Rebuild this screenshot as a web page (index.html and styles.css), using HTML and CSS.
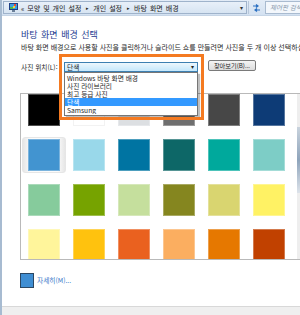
FILE: index.html
```html
<!DOCTYPE html>
<html lang="ko">
<head>
    <meta charset="UTF-8">
    <title>바탕 화면 배경</title>
    <link rel="stylesheet" href="styles.css">
</head>
<body>

<div class="window">

    <div class="navbar">
        <div class="address">
            <svg class="cp-icon" width="9" height="9" viewBox="0 0 9 9">
                <rect x="0" y="0" width="9" height="7" fill="#1f3f86"/>
                <rect x="1" y="1" width="7" height="5" fill="#39a0e3"/>
                <rect x="1" y="4" width="3" height="2" fill="#4fb848"/>
                <rect x="5" y="1" width="2" height="2" fill="#e8483a"/>
                <rect x="4" y="3" width="2" height="2" fill="#f6d43a"/>
                <rect x="3" y="7" width="3" height="2" fill="#6a7f99"/>
            </svg>
            <span class="chev">«</span>
            <span class="crumb">모양 및 개인 설정</span>
            <span class="sep">▸</span>
            <span class="crumb">개인 설정</span>
            <span class="sep">▸</span>
            <span class="crumb">바탕 화면 배경</span>
            <span class="addr-drop">▾</span>
        </div>
        <div class="refresh">
            <svg width="9" height="8" viewBox="0 0 9 8">
                <path d="M1 2 H6 M4 0.5 L6 2 L4 3.5" stroke="#2a6fc2" stroke-width="1.2" fill="none"/>
                <path d="M8 6 H3 M5 4.5 L3 6 L5 7.5" stroke="#2a6fc2" stroke-width="1.2" fill="none"/>
            </svg>
        </div>
        <div class="search">제어판 검색</div>
    </div>

    <div class="content">
        <h1>바탕 화면 배경 선택</h1>
        <p class="desc">바탕 화면 배경으로 사용할 사진을 클릭하거나 슬라이드 쇼를 만들려면 사진을 두 개 이상 선택하십시오.</p>

        <div class="location">
            <label>사진 위치(L):</label>
            <div class="combo">
                <span class="combo-value">단색</span>
                <span class="combo-arrow">▾</span>
                <ul class="combo-list">
                    <li>Windows 바탕 화면 배경</li>
                    <li>사진 라이브러리</li>
                    <li>최고 등급 사진</li>
                    <li class="selected">단색</li>
                    <li>Samsung</li>
                </ul>
                <div class="callout"></div>
            </div>
            <button class="browse">찾아보기(B)...</button>
        </div>

        <div class="swatches">
            <div class="grid">
                <div class="swatch" style="background:#000000"></div>
                <div class="swatch white" style="background:#ffffff"></div>
                <div class="swatch" style="background:#dcdfe2"></div>
                <div class="swatch" style="background:#6f6f6f"></div>
                <div class="swatch" style="background:#474747"></div>
                <div class="swatch" style="background:#0d3b76"></div>

                <div class="swatch current" style="background:#4294d0"></div>
                <div class="swatch" style="background:#99d8ea"></div>
                <div class="swatch" style="background:#0074a2"></div>
                <div class="swatch" style="background:#0d6767"></div>
                <div class="swatch" style="background:#00a99c"></div>
                <div class="swatch" style="background:#7dcdc6"></div>

                <div class="swatch" style="background:#86cb9c"></div>
                <div class="swatch" style="background:#76a300"></div>
                <div class="swatch" style="background:#c5df9d"></div>
                <div class="swatch" style="background:#85861f"></div>
                <div class="swatch" style="background:#d9d570"></div>
                <div class="swatch" style="background:#fff264"></div>

                <div class="swatch" style="background:#fff59b"></div>
                <div class="swatch" style="background:#ffc20e"></div>
                <div class="swatch" style="background:#ea611f"></div>
                <div class="swatch" style="background:#fbae60"></div>
                <div class="swatch" style="background:#e67800"></div>
                <div class="swatch" style="background:#c14100"></div>
            </div>
            <div class="scroll"></div>
        </div>

        <a class="more"><span class="more-icon"></span>자세히(M)...</a>
    </div>

    <div class="statusbar"></div>

</div>

</body>
</html>
```

FILE: styles.css
```css
html, body {
    margin: 0;
    padding: 0;
    background: #ffffff;
}

body {
    width: 300px;
    height: 315px;
    overflow: hidden;
    font-family: "Noto Sans CJK KR", "Noto Sans", sans-serif;
    color: #1e1e1e;
}

.window {
    height: 315px;
    display: flex;
    flex-direction: column;
    border-left: 2px solid #a7bbd1;
    box-sizing: border-box;
}

/* 상단 주소 표시줄 */
.navbar {
    height: 16px;
    display: flex;
    align-items: center;
    padding-left: 1px;
    background: linear-gradient(#e3ecf7, #d3e1f1);
    border-bottom: 1px solid #c6d5e6;
    box-sizing: border-box;
}

.address {
    width: 244px;
    height: 13px;
    display: flex;
    align-items: center;
    padding-left: 5px;
    border: 1px solid #9fb3cb;
    background: linear-gradient(#e8f0f9, #d7e4f2);
    box-sizing: border-box;
    font-size: 7px;
    white-space: nowrap;
}

.cp-icon {
    display: block;
    margin-right: 3px;
}

.chev {
    margin-right: 3px;
    font-size: 7px;
}

.crumb {
    word-spacing: 1px;
}

.sep {
    margin: 0 4px 0 5px;
    font-size: 5px;
}

.addr-drop {
    margin-left: auto;
    margin-right: 3px;
    font-size: 6px;
    color: #333;
}

.refresh {
    width: 14px;
    height: 13px;
    display: flex;
    align-items: center;
    justify-content: center;
    border-left: 1px solid #b7c7da;
    margin-left: 1px;
}

.search {
    flex: 1;
    height: 13px;
    margin-left: 2px;
    padding-left: 4px;
    border: 1px solid #a9bbd0;
    border-right: none;
    background: #f3f7fc;
    box-sizing: border-box;
    font-size: 6.5px;
    line-height: 11px;
    font-style: italic;
    color: #8797ad;
    white-space: nowrap;
    overflow: hidden;
}

/* 본문 */
.content {
    padding-left: 18px;
}

h1 {
    margin: 13px 0 0 1px;
    font-size: 9px;
    line-height: 12px;
    font-weight: normal;
    color: #1e3c91;
    word-spacing: 1px;
}

.desc {
    margin: 2px 0 0 1px;
    font-size: 7px;
    line-height: 9px;
    white-space: nowrap;
    overflow: hidden;
    color: #2a2a2a;
}

.location {
    margin: 8px 0 0 1px;
    height: 12px;
    display: flex;
    align-items: flex-start;
}

.location label {
    width: 43px;
    margin-top: 2px;
    font-size: 6.7px;
    line-height: 10px;
}

.combo {
    position: relative;
    width: 134px;
    height: 10px;
    margin-top: 2px;
    display: flex;
    align-items: center;
    border: 1px solid #3c7fb1;
    background: linear-gradient(#edf7fd, #c4e7fb);
    box-sizing: border-box;
}

.combo-value {
    padding-left: 2px;
    font-size: 6.7px;
    line-height: 8px;
}

.combo-arrow {
    margin-left: auto;
    margin-right: 3px;
    font-size: 6px;
    line-height: 8px;
}

/* 펼쳐진 목록 */
.combo-list {
    position: absolute;
    top: 9px;
    left: -1px;
    width: 134px;
    margin: 0;
    padding: 1px 0 1px;
    list-style: none;
    background: #ffffff;
    border: 1px solid #767676;
    box-sizing: border-box;
    box-shadow: 2px 2px 1px rgba(0, 0, 0, 0.25);
    z-index: 2;
}

.combo-list li {
    height: 8px;
    padding-left: 2px;
    font-size: 6.7px;
    line-height: 8px;
    white-space: nowrap;
    overflow: hidden;
}

.combo-list li.selected {
    background: #3399ff;
    color: #ffffff;
}

/* 강조 표시 테두리 */
.callout {
    position: absolute;
    left: -6px;
    top: -9px;
    width: 145px;
    height: 66px;
    border: 3px solid #f47a21;
    box-sizing: border-box;
    pointer-events: none;
    z-index: 3;
}

.browse {
    width: 48px;
    height: 11px;
    margin-left: 10px;
    padding: 0;
    border: 1px solid #7a7a7a;
    border-radius: 2px;
    background: linear-gradient(#f4f4f4, #dcdcdc);
    font-family: inherit;
    font-size: 6.2px;
    line-height: 9px;
    color: #1e1e1e;
}

/* 색 견본 */
.swatches {
    margin: 21px 0 0 0;
    height: 167px;
    display: flex;
    border: 1px solid #b9b9b9;
    border-right: none;
    box-sizing: border-box;
}

.grid {
    position: relative;
    z-index: 0;
    flex: 1;
    display: grid;
    grid-template-columns: repeat(6, 32px);
    grid-auto-rows: 32px;
    gap: 13px;
    padding-left: 7px;
    overflow: hidden;
}

.swatch {
    position: relative;
    box-shadow: inset 0 0 0 1px rgba(255, 255, 255, 0.3);
}

.swatch.white {
    box-shadow: inset 0 0 0 1px #f2f2f2;
}

.swatch.current::before {
    content: "";
    position: absolute;
    left: -6px;
    top: -2px;
    width: 44px;
    height: 36px;
    border: 1px solid #e6e6e6;
    border-radius: 3px;
    background: linear-gradient(90deg, #e6e6e6, #fbfbfb 18%, #fbfbfb 82%, #e6e6e6);
    box-sizing: border-box;
    z-index: -1;
}

.scroll {
    width: 3px;
    background: linear-gradient(#eeeeee 20%, #c9d3dd 20%, #8ea4bb 40%, #dde3ea 60%, #eeeeee 60%);
}

.more {
    margin-top: 13px;
    display: flex;
    align-items: center;
    font-size: 6.7px;
    line-height: 15px;
    color: #3a78c9;
}

.more-icon {
    width: 14px;
    height: 15px;
    margin-right: 3px;
    border: 1px solid #2b4763;
    background: #3f8ed3;
    box-sizing: border-box;
}

.statusbar {
    margin-top: auto;
    height: 8px;
    background: #efefef;
    border-top: 1px solid #d8d8d8;
}
```
